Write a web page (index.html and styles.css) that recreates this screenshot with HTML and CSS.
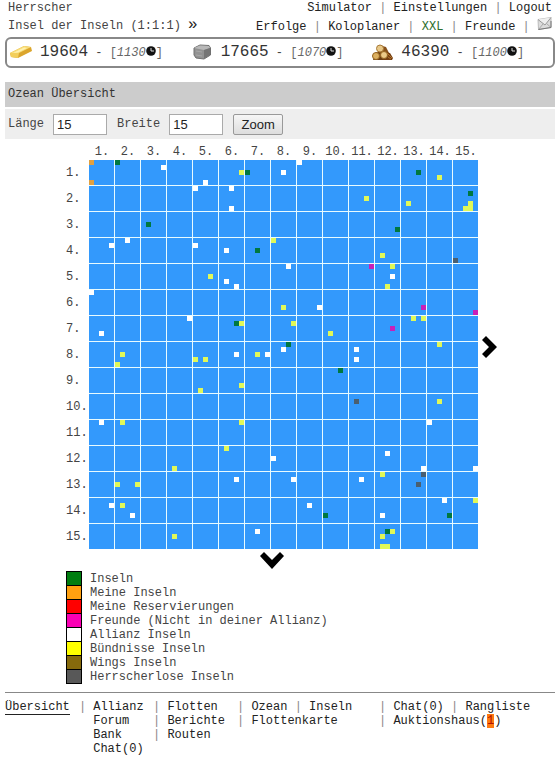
FILE: index.html
```html
<!DOCTYPE html>
<html lang="de">
<head>
  <meta charset="UTF-8">
  <meta name="viewport" content="width=device-width, initial-scale=1.0">
  <title>Ozean Übersicht</title>
  <link rel="stylesheet" href="styles.css">
</head>
<body>
  <header class="top">
    <div class="player">
      <div>Herrscher</div>
      <div>Insel der Inseln (1:1:1) <a class="next" href="#">»</a></div>
    </div>
    <nav class="menu">
      <div><a href="#">Simulator</a> <i>|</i> <a href="#">Einstellungen</a> <i>|</i> <a href="#">Logout</a></div>
      <div><a href="#">Erfolge</a> <i>|</i> <a href="#">Koloplaner</a> <i>|</i> <a class="xxl" href="#">XXL</a> <i>|</i> <a href="#">Freunde</a> <i>|</i> <a href="#" aria-label="Nachrichten"><svg class="mail" viewBox="0 0 15 13">
        <path d="M1 2.500L14 .5V10.500L1.500 12.500Z" fill="#dcdcdc" stroke="#bbb"/>
        <path d="M1 2.500L8 8L14 .5" fill="#efefef" stroke="#999"/>
        <path d="M1.500 12.500L6 7M14 10.500L9.500 6.500" fill="none" stroke="#aaa"/>
        <path d="M1.500 12.500L14 10.500V4" fill="none" stroke="#777"/>
      </svg></a></div>
    </nav>
  </header>

  <!-- Rohstoffe -->
  <section class="resources">
    <div class="resource">
      <svg class="resource-icon" viewBox="0 0 24 18">
        <path d="M1 9L15 2L22 3L23 7L9 14L2 13Z" fill="#dba52c"/>
        <path d="M1 9L15 2L22 3L10 9Z" fill="#f8dc78"/>
        <path d="M4 9L15 3.500L18 4L9 8.500Z" fill="#fff2b0"/>
        <path d="M1 9L10 9L9 14L2 13Z" fill="#f3cf5c"/>
      </svg>
      <div><b>19604</b> - <span class="income">[<em>1130</em><svg class="clock" viewBox="0 0 10 10"><circle cx="5" cy="5" r="4.800" fill="#111"/><path d="M5 2V5H8" fill="none" stroke="#ddd"/></svg>]</span></div>
    </div>
    <div class="resource">
      <svg class="resource-icon" viewBox="0 0 24 18">
        <path d="M4 4L10 1L19 1.500L20.500 4V11L14 15L6 14L4 11Z" fill="#929292" stroke="#707070"/>
        <path d="M4 4L10 1.500L19 2L20 4L14 6Z" fill="#b8b8b8"/>
        <path d="M14 6L20 4V11L14 14.500Z" fill="#757575"/>
        <path d="M6 7L12 8M6 11L12 12" stroke="#a6a6a6"/>
      </svg>
      <div><b>17665</b> - <span class="income">[<em>1070</em><svg class="clock" viewBox="0 0 10 10"><circle cx="5" cy="5" r="4.800" fill="#111"/><path d="M5 2V5H8" fill="none" stroke="#ddd"/></svg>]</span></div>
    </div>
    <div class="resource">
      <svg class="resource-icon" viewBox="0 0 24 18">
        <path d="M9 1L16 3L19 9L14 12H7Z" fill="#87511a"/>
        <path d="M6 8L12 9L14 16H3Z" fill="#6b3d12"/>
        <path d="M15 8L20 9L23 14L22 16H13Z" fill="#743e11"/>
        <circle cx="10" cy="4.500" r="3.500" fill="#e8c888" stroke="#a87a38"/>
        <circle cx="6" cy="12" r="3.500" fill="#dcb060" stroke="#95641f"/>
        <circle cx="14" cy="11" r="3.500" fill="#ecca88" stroke="#95641f"/>
        <path d="M17 9L22 14M18 13L21 15" stroke="#b3752c"/>
      </svg>
      <div><b>46390</b> - <span class="income">[<em>1100</em><svg class="clock" viewBox="0 0 10 10"><circle cx="5" cy="5" r="4.800" fill="#111"/><path d="M5 2V5H8" fill="none" stroke="#ddd"/></svg>]</span></div>
    </div>
  </section>

  <h1 class="title">Ozean Übersicht</h1>

  <form class="zoom">
    <label for="laenge">Länge</label>
    <input id="laenge" type="text" value="15">
    <label for="breite">Breite</label>
    <input id="breite" type="text" value="15">
    <button type="button">Zoom</button>
  </form>

  <main class="ocean">
    <div class="cols">
      <span>1.</span><span>2.</span><span>3.</span><span>4.</span><span>5.</span>
      <span>6.</span><span>7.</span><span>8.</span><span>9.</span><span>10.</span>
      <span>11.</span><span>12.</span><span>13.</span><span>14.</span><span>15.</span>
    </div>
    <div class="rows">
      <span>1.</span><span>2.</span><span>3.</span><span>4.</span><span>5.</span>
      <span>6.</span><span>7.</span><span>8.</span><span>9.</span><span>10.</span>
      <span>11.</span><span>12.</span><span>13.</span><span>14.</span><span>15.</span>
    </div>

    <!-- Karte: Feld = 25px + 1px Linie, Insel = 5px -->
    <svg class="map" viewBox="0 0 389 389" shape-rendering="crispEdges">
      <defs>
        <pattern id="field" width="26" height="26" patternUnits="userSpaceOnUse">
          <path class="line" d="M25 0h1v26h-26v-1h25z"/>
        </pattern>
      </defs>
      <path class="water" d="M0 0h389v389h-389z"/>
      <path fill="url(#field)" d="M0 0h389v389h-389z"/>
      <g class="own">
        <rect x="0" y="0"/><rect x="0" y="20"/>
      </g>
      <g class="island">
        <rect x="26" y="0"/><rect x="156" y="10"/><rect x="327" y="10"/><rect x="379" y="31"/>
        <rect x="57" y="62"/><rect x="306" y="67"/><rect x="166" y="88"/><rect x="145" y="161"/>
        <rect x="197" y="182"/><rect x="249" y="208"/><rect x="234" y="353"/><rect x="358" y="353"/>
        <rect x="296" y="369"/>
      </g>
      <g class="friend">
        <rect x="280" y="104"/><rect x="332" y="145"/><rect x="384" y="150"/><rect x="301" y="166"/>
      </g>
      <g class="ally">
        <rect x="72" y="5"/><rect x="192" y="10"/><rect x="208" y="0"/><rect x="114" y="20"/>
        <rect x="104" y="26"/><rect x="140" y="26"/><rect x="140" y="46"/><rect x="36" y="78"/>
        <rect x="20" y="83"/><rect x="104" y="83"/><rect x="135" y="88"/><rect x="197" y="104"/>
        <rect x="301" y="114"/><rect x="135" y="119"/><rect x="145" y="124"/><rect x="0" y="130"/>
        <rect x="228" y="145"/><rect x="98" y="156"/><rect x="10" y="171"/><rect x="192" y="187"/>
        <rect x="265" y="187"/><rect x="145" y="192"/><rect x="176" y="192"/><rect x="265" y="197"/>
        <rect x="10" y="260"/><rect x="338" y="260"/><rect x="296" y="291"/><rect x="182" y="296"/>
        <rect x="332" y="306"/><rect x="384" y="306"/><rect x="145" y="317"/><rect x="202" y="317"/>
        <rect x="270" y="317"/><rect x="353" y="338"/><rect x="20" y="343"/><rect x="218" y="343"/>
        <rect x="41" y="353"/><rect x="291" y="353"/><rect x="166" y="369"/>
      </g>
      <g class="pact">
        <rect x="150" y="10"/><rect x="348" y="15"/><rect x="275" y="36"/><rect x="317" y="41"/>
        <rect x="379" y="41"/><rect x="374" y="46"/><rect x="379" y="46"/><rect x="182" y="78"/>
        <rect x="291" y="93"/><rect x="301" y="104"/><rect x="119" y="114"/><rect x="296" y="124"/>
        <rect x="192" y="145"/><rect x="322" y="156"/><rect x="332" y="156"/><rect x="150" y="161"/>
        <rect x="202" y="161"/><rect x="239" y="171"/><rect x="348" y="182"/><rect x="31" y="192"/>
        <rect x="166" y="192"/><rect x="104" y="197"/><rect x="114" y="197"/><rect x="26" y="202"/>
        <rect x="150" y="223"/><rect x="109" y="228"/><rect x="348" y="239"/><rect x="31" y="260"/>
        <rect x="150" y="260"/><rect x="135" y="286"/><rect x="83" y="306"/><rect x="291" y="312"/>
        <rect x="26" y="322"/><rect x="46" y="322"/><rect x="384" y="338"/><rect x="31" y="343"/>
        <rect x="301" y="369"/><rect x="83" y="374"/><rect x="291" y="374"/><rect x="291" y="384"/>
        <rect x="296" y="384"/>
      </g>
      <g class="free">
        <rect x="364" y="98"/><rect x="265" y="239"/><rect x="332" y="312"/><rect x="327" y="322"/>
      </g>
    </svg>

    <a class="east" href="#" aria-label="Osten"><svg width="15" height="22" viewBox="0 0 15 22"><path d="M0 4L4 0L15 11L4 22L0 18L7 11Z"/></svg></a>
    <a class="south" href="#" aria-label="Süden"><svg width="26" height="17" viewBox="0 0 26 17"><path d="M1 4L5 0L13 8L21 0L25 4L13 17Z"/></svg></a>

    <ul class="legend">
      <li><span class="swatch green"></span>Inseln</li>
      <li><span class="swatch orange"></span>Meine Inseln</li>
      <li><span class="swatch red"></span>Meine Reservierungen</li>
      <li><span class="swatch pink"></span>Freunde (Nicht in deiner Allianz)</li>
      <li><span class="swatch white"></span>Allianz Inseln</li>
      <li><span class="swatch yellow"></span>Bündnisse Inseln</li>
      <li><span class="swatch brown"></span>Wings Inseln</li>
      <li><span class="swatch grey"></span>Herrscherlose Inseln</li>
    </ul>
  </main>

  <footer class="footer">
    <div><a class="active" href="#">Übersicht</a></div>
    <div class="group">
      <i>|</i>
      <div><a href="#">Allianz</a><br><a href="#">Forum</a><br><a href="#">Bank</a><br><a href="#">Chat(0)</a></div>
    </div>
    <div>
      <i>|</i> <a href="#">Flotten</a><br>
      <i>|</i> <a href="#">Berichte</a><br>
      <i>|</i> <a href="#">Routen</a>
    </div>
    <div>
      <i>|</i> <a href="#">Ozean</a> <i>|</i> <a href="#">Inseln</a><br>
      <i>|</i> <a href="#">Flottenkarte</a>
    </div>
    <div>
      <i>|</i> <a href="#">Chat(0)</a> <i>|</i> <a href="#">Rangliste</a><br>
      <i>|</i> <a href="#">Auktionshaus(<span class="hot">1</span>)</a>
    </div>
  </footer>
</body>
</html>
```
FILE: styles.css
```css
* {
  margin: 0;
  padding: 0;
  box-sizing: border-box;
}

body {
  padding: 0 5px;
  background: #fff;
  color: #444;
  font-family: 'Courier New', 'Liberation Mono', monospace;
  font-size: 12px;
  line-height: 14px;
}

a {
  color: #222;
  text-decoration: none;
}

i {
  color: #888;
  font-style: normal;
}

svg {
  display: block;
}

/* Kopfzeile */
.top {
  display: flex;
  justify-content: space-between;
  padding: 0 3px;
  line-height: 17px;
}

.top div {
  height: 17px;
  white-space: nowrap;
}

.top .player {
  height: auto;
}

.next {
  font-size: 16px;
}

.menu {
  text-align: right;
}

.menu .xxl {
  color: #2d6e2d;
}

.mail {
  display: inline-block;
  width: 15px;
  height: 13px;
  vertical-align: 0;
}

/* Rohstoffe */
.resources {
  display: grid;
  grid-template-columns: repeat(3, 1fr);
  align-items: center;
  height: 31px;
  margin-top: 3px;
  padding: 0 2px;
  border: 2px solid #888;
  border-radius: 6px;
}

.resource {
  display: flex;
  align-items: center;
  gap: 7px;
  white-space: nowrap;
}

.resource-icon {
  width: 24px;
  height: 18px;
}

.resource b {
  color: #333;
  font-size: 16px;
  font-weight: normal;
}

.income {
  color: #666;
}

.clock {
  display: inline-block;
  width: 10px;
  height: 10px;
}

/* Titel und Zoom */
.title {
  margin-top: 14px;
  padding: 0 3px;
  background: #ccc;
  color: #333;
  font-size: 12px;
  font-weight: normal;
  line-height: 25px;
}

.zoom {
  display: flex;
  align-items: center;
  height: 30px;
  margin-top: 2px;
  padding: 0 3px;
  background: #eee;
}

.zoom input {
  width: 54px;
  height: 21px;
  margin: 0 10px 0 9px;
  padding: 0 3px;
  border: 1px solid #aaa;
  background: #fff;
  color: #222;
  font: 13px Arial, 'Liberation Sans', sans-serif;
}

.zoom button {
  width: 50px;
  height: 21px;
  border: 1px solid #999;
  border-radius: 2px;
  background: linear-gradient(#f6f6f6, #ddd);
  color: #222;
  font: 13px Arial, 'Liberation Sans', sans-serif;
}

/* Ozean */
.ocean {
  display: grid;
  grid-template-columns: 23px 389px 19px;
  width: fit-content;
  margin: 6px auto 0;
  padding-left: 3px;
}

.cols {
  display: grid;
  grid-row: 1;
  grid-column: 2;
  grid-template-columns: repeat(15, 26px);
  height: 15px;
  text-align: center;
}

.rows {
  display: grid;
  grid-row: 2;
  grid-column: 1;
  grid-template-rows: repeat(15, 26px);
  height: 389px;
  line-height: 26px;
}

.map {
  grid-row: 2;
  grid-column: 2;
  width: 389px;
  height: 389px;
}

.map rect {
  width: 5px;
  height: 5px;
}

.water { fill: #3399fc; }
.line { fill: #e8fbff; }
.own { fill: #e0a040; }
.island { fill: #007840; }
.friend { fill: #c820b8; }
.ally { fill: #fff; }
.pact { fill: #e0f858; }
.free { fill: #4a5f70; }

.east {
  grid-row: 1 / 3;
  grid-column: 3;
  align-self: center;
  justify-self: end;
}

.south {
  grid-row: 3;
  grid-column: 1 / 3;
  justify-self: center;
  padding: 3px 0 2px;
}

/* Legende */
.legend {
  grid-row: 4;
  grid-column: 1 / 4;
  list-style: none;
}

.legend li {
  display: flex;
  gap: 8px;
  height: 14px;
  line-height: 16px;
}

.swatch {
  width: 16px;
  height: 15px;
  border: 1px solid #000;
}

.green { background: #007d10; }
.orange { background: #ffa010; }
.red { background: #f00; }
.pink { background: #fa00b4; }
.white { background: #fff; }
.yellow { background: #ff0; }
.brown { background: #866a0c; }
.grey { background: #585858; }

/* Fusszeile */
.footer {
  display: grid;
  grid-template-columns: 74px 74px 84px 142px 1fr;
  margin-top: 9px;
  padding-top: 7px;
  border-top: 1px solid #888;
  white-space: nowrap;
}

.group {
  display: flex;
  gap: 7px;
}

.active {
  border-bottom: 1px solid #222;
}

.hot {
  background: #ff7a10;
  color: #b01000;
}
```
